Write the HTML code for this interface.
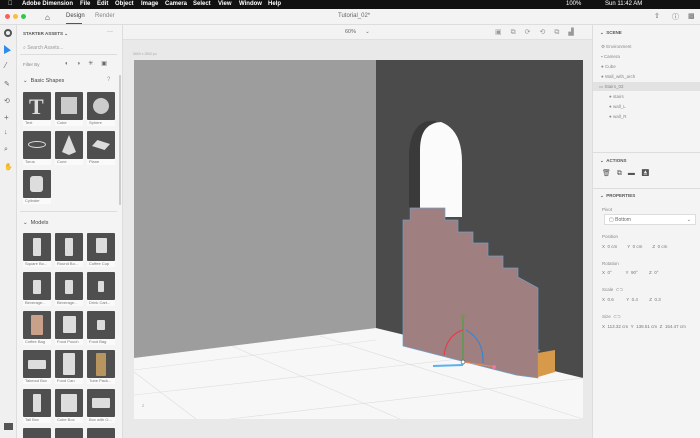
<!DOCTYPE html>
<html style="overflow:hidden;width:700px;height:438px"><head><meta charset="utf-8"><style>
*{margin:0;padding:0;box-sizing:border-box}
body{width:700px;height:438px;overflow:hidden;background:#e9e9e9;font-family:"Liberation Sans",sans-serif;position:relative;font-size:5px;color:#555}
.abs{position:absolute}
.menu{left:0;top:0;width:700px;height:9px;background:#111;color:#fff;font-weight:bold;font-size:6px;line-height:9px}
.menu span{position:absolute;top:0}
.title{left:0;top:9px;width:700px;height:16px;background:#f3f3f3;border-bottom:1px solid #ddd}
.tools{left:0;top:25px;width:17px;height:413px;background:#f0f0f0;border-right:1px solid #ddd;overflow:hidden}
.lp{left:17px;top:25px;width:106px;height:413px;background:#f4f4f4;border-right:1px solid #ddd;overflow:hidden}
.th{position:absolute;width:28px;height:28px;background:#4f4f4f;border-radius:1px}
.th i{position:absolute;left:10px;top:5px;width:8px;height:18px;background:#ddd;border-radius:1px}
.tl{position:absolute;width:28px;height:6px;background:#fafafa;font-size:4px;color:#777;line-height:6px;padding-left:2px;white-space:nowrap;overflow:hidden}
.rp{left:592px;top:25px;width:108px;height:413px;background:#f4f4f4;border-left:1px solid #ddd;overflow:hidden}
.ct{left:123px;top:25px;width:469px;height:15px;background:#f3f3f3;border-bottom:1px solid #e0e0e0}
.sec{position:absolute;left:0;width:108px;height:1px;background:#ddd}
.lbl{position:absolute;font-size:4.5px;color:#888;white-space:nowrap}
</style></head><body>
<div class="abs menu">
<span style="left:8px">&#63743;</span><span style="left:22px">Adobe Dimension</span><span style="left:80px">File</span><span style="left:97px">Edit</span><span style="left:115px">Object</span><span style="left:141px">Image</span><span style="left:165px">Camera</span><span style="left:193px">Select</span><span style="left:218px">View</span><span style="left:239px">Window</span><span style="left:268px">Help</span>
<span style="left:605px;font-weight:normal">Sun 11:42 AM</span><span style="left:566px;font-weight:normal">100%</span>
</div>
<div class="abs title">
<div class="abs" style="left:5px;top:5px;width:5px;height:5px;border-radius:50%;background:#fc605c"></div>
<div class="abs" style="left:13px;top:5px;width:5px;height:5px;border-radius:50%;background:#fdbc40"></div>
<div class="abs" style="left:21px;top:5px;width:5px;height:5px;border-radius:50%;background:#34c84a"></div>
<div class="abs" style="left:45px;top:4px;font-size:8px;color:#333">&#8962;</div>
<div class="abs" style="left:66px;top:4px;font-size:6px;color:#444">Design</div>
<div class="abs" style="left:66px;top:14px;width:16px;height:1px;background:#555"></div>
<div class="abs" style="left:95px;top:4px;font-size:6px;color:#888">Render</div>
<div class="abs" style="left:338px;top:4px;font-size:6px;color:#666">Tutorial_02*</div>
<div class="abs" style="left:654px;top:3px;font-size:7px;color:#666">&#8679;</div>
<div class="abs" style="left:672px;top:3px;font-size:7px;color:#666">&#9432;</div>
<div class="abs" style="left:688px;top:3px;font-size:7px;color:#666">&#9641;</div>
</div>
<div class="abs tools">
<div class="abs" style="left:4px;top:4px;width:8px;height:8px;border:2px solid #555;border-radius:50%"></div>
<div class="abs" style="left:4px;top:20px;width:7px;height:9px;background:#2d8ceb;clip-path:polygon(0 0,100% 60%,0 100%)"></div>
<div class="abs" style="left:5px;top:37px;font-size:8px;color:#666;line-height:1">⁄</div>
<div class="abs" style="left:4px;top:55px;font-size:7px;color:#666">✎</div>
<div class="abs" style="left:4px;top:72px;font-size:7px;color:#666">⟲</div>
<div class="abs" style="left:4px;top:88px;font-size:8px;color:#666">+</div>
<div class="abs" style="left:4px;top:104px;font-size:7px;color:#666">↓</div>
<div class="abs" style="left:4px;top:121px;font-size:7px;color:#666">⌕</div>
<div class="abs" style="left:4px;top:138px;font-size:7px;color:#666">✋</div>
<div class="abs" style="left:4px;top:398px;width:9px;height:7px;background:#555"></div>
</div>
<div class="abs lp">
<div class="abs" style="left:6px;top:6px;font-size:4.5px;font-weight:bold;color:#555">STARTER ASSETS ⌄</div>
<div class="abs" style="left:90px;top:4px;font-size:6px;color:#666">···</div>
<div class="abs" style="left:6px;top:20px;font-size:5px;color:#999">⌕ Search Assets...</div>
<div class="abs" style="left:3px;top:29px;width:97px;height:1px;background:#ddd"></div>
<div class="abs" style="left:6px;top:37px;font-size:4.5px;color:#888">Filter By</div>
<div class="abs" style="left:48px;top:35px;font-size:6px;color:#666;letter-spacing:8px">◐◑✳▣</div>
<div class="abs" style="left:6px;top:53px;font-size:5.5px;color:#444">⌄ &nbsp;Basic Shapes</div>
<div class="abs" style="left:90px;top:52px;font-size:6px;color:#999">?</div>
<div class="th" style="left:6px;top:67px"></div><div class="th" style="left:38px;top:67px"></div><div class="th" style="left:70px;top:67px"></div>
<div class="tl" style="left:6px;top:95px">Text</div><div class="tl" style="left:38px;top:95px">Cube</div><div class="tl" style="left:70px;top:95px">Sphere</div>
<div class="abs" style="left:12px;top:69px;font-size:22px;font-weight:bold;color:#ddd;font-family:'Liberation Serif',serif">T</div>
<div class="abs" style="left:44px;top:72px;width:16px;height:17px;background:#ccc"></div>
<div class="abs" style="left:76px;top:73px;width:16px;height:16px;border-radius:50%;background:#ccc"></div>
<div class="th" style="left:6px;top:106px"></div><div class="th" style="left:38px;top:106px"></div><div class="th" style="left:70px;top:106px"></div>
<div class="tl" style="left:6px;top:134px">Torus</div><div class="tl" style="left:38px;top:134px">Cone</div><div class="tl" style="left:70px;top:134px">Plane</div>
<div class="abs" style="left:11px;top:116px;width:18px;height:7px;border:1.5px solid #ddd;border-radius:50%"></div>
<div class="abs" style="left:45px;top:110px;width:14px;height:20px;background:#ddd;clip-path:polygon(50% 0,100% 85%,50% 100%,0 85%)"></div>
<div class="abs" style="left:75px;top:115px;width:18px;height:10px;background:#ddd;clip-path:polygon(30% 0,100% 40%,70% 100%,0 60%)"></div>
<div class="th" style="left:6px;top:145px"></div><div class="tl" style="left:6px;top:173px">Cylinder</div>
<div class="abs" style="left:13px;top:151px;width:13px;height:16px;background:#ddd;border-radius:3px"></div>
<div class="abs" style="left:3px;top:186px;width:97px;height:1px;background:#ddd"></div>
<div class="abs" style="left:6px;top:195px;font-size:5.5px;color:#444">⌄ &nbsp;Models</div>
<div class="th" style="left:6px;top:208px"><i></i></div><div class="th" style="left:38px;top:208px"><i></i></div><div class="th" style="left:70px;top:208px"><i style="width:11px;left:9px;height:15px"></i></div>
<div class="tl" style="left:6px;top:236px">Square Bo...</div><div class="tl" style="left:38px;top:236px">Round Bo...</div><div class="tl" style="left:70px;top:236px">Coffee Cup</div>
<div class="th" style="left:6px;top:247px"><i style="top:8px;height:14px"></i></div><div class="th" style="left:38px;top:247px"><i style="top:8px;height:14px"></i></div><div class="th" style="left:70px;top:247px"><i style="top:9px;height:11px;width:6px;left:11px"></i></div>
<div class="tl" style="left:6px;top:275px">Beverage...</div><div class="tl" style="left:38px;top:275px">Beverage...</div><div class="tl" style="left:70px;top:275px">Drink Cart...</div>
<div class="th" style="left:6px;top:286px"><i style="background:#c9a08a;width:12px;left:8px;top:4px;height:20px"></i></div><div class="th" style="left:38px;top:286px"><i style="width:13px;left:8px;top:5px;height:17px"></i></div><div class="th" style="left:70px;top:286px"><i style="top:9px;height:10px"></i></div>
<div class="tl" style="left:6px;top:314px">Coffee Bag</div><div class="tl" style="left:38px;top:314px">Food Pouch</div><div class="tl" style="left:70px;top:314px">Food Bag</div>
<div class="th" style="left:6px;top:325px"><i style="width:18px;left:5px;top:10px;height:9px"></i></div><div class="th" style="left:38px;top:325px"><i style="width:12px;left:8px;top:3px;height:22px"></i></div><div class="th" style="left:70px;top:325px"><i style="background:#b8955f;width:10px;left:9px;top:3px;height:23px"></i></div>
<div class="tl" style="left:6px;top:353px">Takeout Box</div><div class="tl" style="left:38px;top:353px">Food Can</div><div class="tl" style="left:70px;top:353px">Tube Pack...</div>
<div class="th" style="left:6px;top:364px"><i></i></div><div class="th" style="left:38px;top:364px"><i style="width:16px;left:6px;top:5px"></i></div><div class="th" style="left:70px;top:364px"><i style="width:18px;left:5px;top:9px;height:10px"></i></div>
<div class="tl" style="left:6px;top:392px">Tall Box</div><div class="tl" style="left:38px;top:392px">Cube Box</div><div class="tl" style="left:70px;top:392px">Box with O...</div>
<div class="th" style="left:6px;top:403px"></div><div class="th" style="left:38px;top:403px"></div><div class="th" style="left:70px;top:403px"></div>
<div class="abs" style="left:102px;top:50px;width:2px;height:130px;background:#ccc"></div>
</div>
<div class="abs ct">
<div class="abs" style="left:222px;top:4px;font-size:5.5px;color:#666">60% &nbsp;&nbsp;&nbsp;&nbsp;&nbsp;⌄</div>
<div class="abs" style="left:372px;top:3px;font-size:7px;color:#999;letter-spacing:9px">▣⧉⟳⟲⧉▟</div>
</div>
<div class="abs" style="left:133px;top:52px;font-size:3.5px;color:#aaa">5600 x 2800 px</div>
<svg class="abs" style="left:0;top:0" width="700" height="438">
<rect x="134" y="60" width="242" height="300" fill="#9d9d9d"/>
<rect x="376" y="60" width="207" height="320" fill="#4b4b4b"/>
<polygon points="134,358 376,328 583,378 583,419 134,419" fill="#f7f7f7"/>
<g stroke="#ddd" stroke-width="0.6" fill="none">
<line x1="134" y1="370" x2="376" y2="340"/><line x1="134" y1="395" x2="540" y2="350"/>
<line x1="230" y1="419" x2="583" y2="378"/><line x1="134" y1="372" x2="196" y2="419"/>
<line x1="232" y1="346" x2="400" y2="419"/><line x1="320" y1="336" x2="583" y2="419"/>
</g>
<path d="M409,220 L409,152 Q412,118 436,121 L436,221 Z" fill="#3a3a3a"/>
<path d="M420,217 L420,150 Q420,123 441,122 Q462,130 462,162 L462,217 Z" fill="#fbfbfb"/>
<polygon points="403,220 410,220 410,208 445,208 445,220 458,220 458,232 473,232 473,243 488,243 488,256 503,256 503,268 518,268 518,277 538,288 538,378 516,375 403,346" fill="#a07f80" stroke="#6fa0c8" stroke-width="0.7"/>
<polygon points="538,353 555,350 555,372 538,377" fill="#d79a4a"/>
<g stroke-width="1" fill="none">
<line x1="463" y1="365" x2="463" y2="315" stroke="#3a3"/>
<path d="M444,355 Q447,335 463,330" stroke="#e34"/>
<path d="M466,330 Q484,340 483,363" stroke="#2a85d8"/>
<line x1="433" y1="366" x2="463" y2="365" stroke="#5ab0f0" stroke-width="2"/>
<line x1="463" y1="362" x2="496" y2="367" stroke="#e85"/>
</g>
<circle cx="463" cy="362" r="2" fill="#fff" stroke="#333" stroke-width="0.5"/>
<circle cx="463" cy="316" r="3" fill="#8a8a60" opacity="0.6"/>
<circle cx="494" cy="367" r="2" fill="#e77aa0"/>
<text x="142" y="407" font-size="3.5" fill="#999" font-family="Liberation Sans">Z</text>
</svg>
<div class="abs rp">
<div class="abs" style="left:7px;top:5px;font-size:4.5px;font-weight:bold;color:#555">⌄ &nbsp;SCENE</div>
<div class="lbl" style="left:8px;top:19px">⚙ Environment</div>
<div class="lbl" style="left:8px;top:29px">▪ Camera</div>
<div class="lbl" style="left:8px;top:39px">● Cube</div>
<div class="lbl" style="left:8px;top:49px">● Wall_with_arch</div>
<div class="abs" style="left:0;top:57px;width:108px;height:9px;background:#e2e2e2"></div>
<div class="lbl" style="left:6px;top:59px">▭ Stairs_02</div>
<div class="lbl" style="left:16px;top:69px">● stairs</div>
<div class="lbl" style="left:16px;top:79px">● wall_L</div>
<div class="lbl" style="left:16px;top:89px">● wall_R</div>
<div class="sec" style="top:127px"></div>
<div class="abs" style="left:7px;top:133px;font-size:4.5px;font-weight:bold;color:#555">⌄ &nbsp;ACTIONS</div>
<div class="abs" style="left:9px;top:144px;font-size:7px;color:#555;letter-spacing:6px">🗑⧉▬⏏</div>
<div class="sec" style="top:163px"></div>
<div class="abs" style="left:7px;top:168px;font-size:4.5px;font-weight:bold;color:#555">⌄ &nbsp;PROPERTIES</div>
<div class="lbl" style="left:9px;top:182px">Pivot</div>
<div class="abs" style="left:11px;top:189px;width:92px;height:11px;background:#fff;border:1px solid #ddd;font-size:5px;color:#666;padding:2px 4px">▢ Bottom<span style="float:right">⌄</span></div>
<div class="lbl" style="left:9px;top:209px">Position</div>
<div class="lbl" style="left:9px;top:219px;color:#777">X &nbsp;0 cm &nbsp;&nbsp;&nbsp;&nbsp;&nbsp;&nbsp;&nbsp;Y &nbsp;0 cm &nbsp;&nbsp;&nbsp;&nbsp;&nbsp;&nbsp;&nbsp;Z &nbsp;0 cm</div>
<div class="lbl" style="left:9px;top:236px">Rotation</div>
<div class="lbl" style="left:9px;top:245px;color:#777">X &nbsp;0° &nbsp;&nbsp;&nbsp;&nbsp;&nbsp;&nbsp;&nbsp;&nbsp;&nbsp;&nbsp;Y &nbsp;90° &nbsp;&nbsp;&nbsp;&nbsp;&nbsp;&nbsp;&nbsp;&nbsp;Z &nbsp;0°</div>
<div class="lbl" style="left:9px;top:262px">Scale &nbsp;⊂⊃</div>
<div class="lbl" style="left:9px;top:272px;color:#777">X &nbsp;0.6 &nbsp;&nbsp;&nbsp;&nbsp;&nbsp;&nbsp;&nbsp;&nbsp;&nbsp;Y &nbsp;0.4 &nbsp;&nbsp;&nbsp;&nbsp;&nbsp;&nbsp;&nbsp;&nbsp;Z &nbsp;0.3</div>
<div class="lbl" style="left:9px;top:289px">Size &nbsp;⊂⊃</div>
<div class="lbl" style="left:9px;top:299px;color:#777">X &nbsp;113.32 cm &nbsp;Y &nbsp;138.51 cm &nbsp;Z &nbsp;154.47 cm</div>
</div>
</body></html>
